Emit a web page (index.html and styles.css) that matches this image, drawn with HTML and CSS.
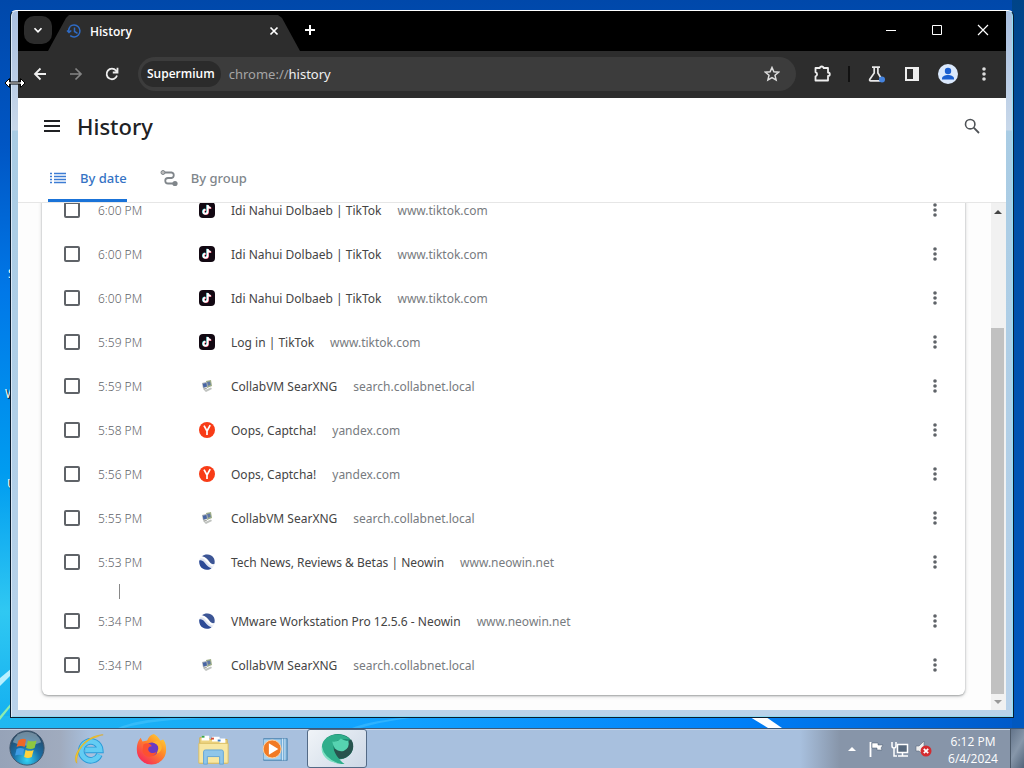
FILE: index.html
```html
<!DOCTYPE html>
<html lang="en">
<head>
    <meta charset="utf-8">
    <title>History</title>
    <link rel="stylesheet" href="styles.css">
</head>

<body>
    <!-- shared icons -->
    <svg class="sprite" aria-hidden="true">
        <symbol id="dots" viewBox="0 0 16 16">
            <circle cx="8" cy="3" r="1.8"/><circle cx="8" cy="8" r="1.8"/><circle cx="8" cy="13" r="1.8"/>
        </symbol>
        <symbol id="tiktok" viewBox="0 0 16 16">
            <rect width="16" height="16" rx="4" fill="#120812"/>
            <path d="M8.600 3v6.700a2.100 2.100 0 1 1-2.100-2.100M8.600 3.200c.3 1.700 1.400 2.600 3.200 2.700" transform="translate(-.5 -.3)" fill="none" stroke="#39d5d8" stroke-width="1.600"/>
            <path d="M8.600 3v6.700a2.100 2.100 0 1 1-2.100-2.100M8.600 3.200c.3 1.700 1.400 2.600 3.200 2.700" transform="translate(.6 .4)" fill="none" stroke="#ee3a5c" stroke-width="1.600"/>
            <path d="M8.600 3v6.700a2.100 2.100 0 1 1-2.100-2.100M8.600 3.200c.3 1.700 1.400 2.600 3.200 2.700" fill="none" stroke="#fff" stroke-width="1.900"/>
        </symbol>
        <symbol id="collabvm" viewBox="0 0 16 16">
            <path d="M7 3l5-1 1 6-5 2z" fill="#9fae86"/>
            <path d="M8 4l3-.6.700 3.600-3 .8z" fill="#5f77a4"/>
            <path d="M3 5l5-1.200 1 5-5 1.500z" fill="#a9afb5"/>
            <path d="M3.800 5.800l3.500-.8.700 3.400-3.500 1z" fill="#4664a4"/>
            <path d="M5 12.500l7-3 1 1.500-6 3z" fill="#c0c3c0"/>
            <path d="M4 10.500l3.500-.8.500 1-3 1.300z" fill="#a5a8a2"/>
        </symbol>
        <symbol id="yandex" viewBox="0 0 16 16">
            <circle cx="8" cy="8" r="8" fill="#f83c17"/>
            <path d="M5 3.600l3 5.400v4M11.200 3.200L8 9" fill="none" stroke="#fff" stroke-width="1.700"/>
        </symbol>
        <symbol id="neowin" viewBox="0 0 16 16">
            <circle cx="8" cy="8" r="7.800" fill="#dfe5f1"/>
            <path d="M3 2.200C7-.8 13 .5 15 4.500c.8 2 .8 4 .3 5.500-2 .3-3.500-.5-5-2.500C8 4.500 6 3 3 2.200z" fill="#3c5595"/>
            <path d="M.3 6.500C2.500 6 4 6.800 6 9.300c2 2.600 4 4.500 6.500 5C9 17 3.500 16 1.200 12 .2 10 0 8 .3 6.500z" fill="#2c4a96"/>
            <path d="M1 3.500C5 3 6.500 5 9 8s4 4 5.500 3.500" fill="none" stroke="#fff" stroke-width="1.800"/>
        </symbol>
    </svg>

    <main class="desktop">
        <svg class="wallpaper" viewBox="0 0 1024 728" preserveAspectRatio="none" aria-hidden="true">
            <path d="M0 678L12 668V674L0 686z" fill="#b8f0ff"/>
            <path d="M0 716L12 702V705L0 720z" fill="#8cecb0"/>
            <path d="M118 728Q135 720 170 718H210Q150 720 124 728z" fill="#5cccff" opacity=".4"/>
            <path d="M352 728Q366 722 400 718H410Q380 722 360 728z" fill="#4bc4ff" opacity=".5"/>
            <path d="M750 717H766L782 728H768z" fill="#fff"/>
        </svg>
        <span class="shortcut shortcut-1">S</span>
        <span class="shortcut shortcut-2">W</span>
        <span class="shortcut shortcut-3">U</span>

        <section class="window">
            <header class="titlebar">
                <button class="tab-search" aria-label="Search tabs">
                    <svg viewBox="0 0 16 16"><path d="M4 6l4 4 4-4" fill="none" stroke="#fff" stroke-width="2"/></svg>
                </button>
                <div class="browser-tab">
                    <svg class="tab-icon" viewBox="0 0 16 16"><path d="M4 3.500A6 6 0 1 1 4.200 12.700M2.800 9A6 6 0 0 1 4 3.800M8.500 4.500v4l3 1.800M1 7.500l2 2 2.300-2" fill="none" stroke="#2f6bc4" stroke-width="1.500"/></svg>
                    <span class="tab-title">History</span>
                    <button class="icon-button tab-close" aria-label="Close tab">
                        <svg viewBox="0 0 16 16"><path d="M4.500 4.500l7 7m0-7l-7 7" stroke="#fff" stroke-width="1.700"/></svg>
                    </button>
                </div>
                <button class="icon-button new-tab" aria-label="New tab">
                    <svg viewBox="0 0 16 16"><path d="M8 3v10M3 8h10" stroke="#fff" stroke-width="2"/></svg>
                </button>
                <div class="window-buttons">
                    <button class="icon-button" aria-label="Minimize"><svg viewBox="0 0 16 16"><path d="M3 8.500h10" stroke="#fff"/></svg></button>
                    <button class="icon-button" aria-label="Maximize"><svg viewBox="0 0 16 16"><path d="M3.500 3.500h9v9h-9z" fill="none" stroke="#fff"/></svg></button>
                    <button class="icon-button" aria-label="Close"><svg viewBox="0 0 16 16"><path d="M3 3l10 10M13 3L3 13" stroke="#fff" stroke-width="1.200"/></svg></button>
                </div>
            </header>

            <nav class="toolbar">
                <button class="icon-button" aria-label="Back"><svg viewBox="0 0 16 16"><path d="M14 8H3m5.500-5.500L3 8l5.500 5.500" fill="none" stroke="#eee" stroke-width="1.800"/></svg></button>
                <button class="icon-button" aria-label="Forward"><svg viewBox="0 0 16 16"><path d="M2 8h11M7.500 2.500L13 8l-5.500 5.500" fill="none" stroke="#858585" stroke-width="1.700"/></svg></button>
                <button class="icon-button" aria-label="Reload"><svg viewBox="0 0 16 16"><path d="M13 9.500a5.300 5.300 0 1 1-1-5l1 1.500M13.500 1.800v4.700H8.800" fill="none" stroke="#eee" stroke-width="1.800"/></svg></button>
                <form class="omnibox">
                    <button type="button" class="site-chip">Supermium</button>
                    <a class="address" href="chrome://history">chrome://<b>history</b></a>
                    <button type="button" class="icon-button" aria-label="Bookmark this tab"><svg viewBox="0 0 16 16"><path d="M8 1.500l1.900 4.300 4.700.4-3.600 3.100 1.100 4.600L8 11.500l-4.100 2.400L5 9.300 1.400 6.200l4.700-.4z" fill="none" stroke="#ddd" stroke-width="1.500"/></svg></button>
                </form>
                <button class="icon-button" aria-label="Extensions"><svg class="wide" viewBox="0 0 18 18"><path d="M2.500 3h4.300q0-1.500 1.900-1.500T10.600 3H15v4.500q1.800 0 1.800 1.700T15 11v4.500H2.500V11.300q1.600-.2 1.600-2t-1.600-2z" fill="none" stroke="#eee" stroke-width="1.800" stroke-linejoin="round"/></svg></button>
                <span class="divider"></span>
                <button class="icon-button" aria-label="Experiments"><svg class="wide" viewBox="0 0 18 18"><path d="M5 2.200h8M7.200 2.500V8l-4.500 6.500q-.4 1.300 1 1.400H14q1.500-.2.900-1.400L10.900 8V2.500" fill="none" stroke="#e8e8e8" stroke-width="1.700"/><circle cx="15" cy="14.500" r="3" fill="#4584df"/></svg></button>
                <button class="icon-button" aria-label="Side panel"><svg viewBox="0 0 16 16"><path d="M1 1h14v14H1zM3 3v10h6V3z" fill="#eee" fill-rule="evenodd"/></svg></button>
                <button class="icon-button" aria-label="Profile"><svg class="avatar" viewBox="0 0 20 20"><circle cx="10" cy="10" r="10" fill="#dbe9fd"/><circle cx="10" cy="7" r="3.200" fill="#1a5fd0"/><path d="M4 15.500v-1c0-2.200 3-3.500 6-3.500s6 1.300 6 3.500v1z" fill="#1a5fd0"/></svg></button>
                <button class="icon-button" aria-label="Menu"><svg viewBox="0 0 16 16" fill="#ddd"><use href="#dots"/></svg></button>
            </nav>

            <div class="page">
                <header class="page-header">
                    <button class="icon-button" aria-label="Main menu"><svg viewBox="0 0 16 16"><path d="M0 3h16M0 8h16M0 13h16" stroke="#202124" stroke-width="2"/></svg></button>
                    <h1>History</h1>
                    <button class="icon-button search" aria-label="Search history"><svg viewBox="0 0 16 16"><circle cx="6.200" cy="6.200" r="4.700" fill="none" stroke="#4f5357" stroke-width="1.600"/><path d="M9.700 9.700l5.300 5.300" stroke="#4f5357" stroke-width="1.800"/></svg></button>
                </header>

                <div class="view-tabs" role="tablist">
                    <button class="view-tab active" role="tab" aria-selected="true">
                        <svg viewBox="0 0 20 20"><path d="M2 5.500h2m2 0h12M2 8.500h2m2 0h12M2 11.500h2m2 0h12M2 14.500h2m2 0h12" stroke="#3c7cd4" stroke-width="1.400"/></svg>
                        By date
                    </button>
                    <button class="view-tab" role="tab" aria-selected="false">
                        <svg viewBox="0 0 20 20"><path d="M5 4.500h7.500a2.800 2.800 0 0 1 0 5.500H9a2.700 2.700 0 0 0 0 5.500h6" fill="none" stroke="#80868b" stroke-width="1.800"/><circle cx="4" cy="4.500" r="2" fill="#bbb" stroke="#80868b"/><circle cx="16" cy="15.500" r="2.600" fill="#80868b"/></svg>
                        By group
                    </button>
                </div>

                <div class="scroll-area">
                    <div class="history">
                        <ul class="card">
                            <li class="row"><input type="checkbox" id="e1"><time>6:00 PM</time><svg class="favicon"><use href="#tiktok"/></svg><label for="e1">Idi Nahui Dolbaeb | TikTok</label><span class="domain">www.tiktok.com</span><button class="icon-button more" aria-label="Actions"><svg><use href="#dots"/></svg></button></li>
                            <li class="row"><input type="checkbox" id="e2"><time>6:00 PM</time><svg class="favicon"><use href="#tiktok"/></svg><label for="e2">Idi Nahui Dolbaeb | TikTok</label><span class="domain">www.tiktok.com</span><button class="icon-button more" aria-label="Actions"><svg><use href="#dots"/></svg></button></li>
                            <li class="row"><input type="checkbox" id="e3"><time>6:00 PM</time><svg class="favicon"><use href="#tiktok"/></svg><label for="e3">Idi Nahui Dolbaeb | TikTok</label><span class="domain">www.tiktok.com</span><button class="icon-button more" aria-label="Actions"><svg><use href="#dots"/></svg></button></li>
                            <li class="row"><input type="checkbox" id="e4"><time>5:59 PM</time><svg class="favicon"><use href="#tiktok"/></svg><label for="e4">Log in | TikTok</label><span class="domain">www.tiktok.com</span><button class="icon-button more" aria-label="Actions"><svg><use href="#dots"/></svg></button></li>
                            <li class="row"><input type="checkbox" id="e5"><time>5:59 PM</time><svg class="favicon"><use href="#collabvm"/></svg><label for="e5">CollabVM SearXNG</label><span class="domain">search.collabnet.local</span><button class="icon-button more" aria-label="Actions"><svg><use href="#dots"/></svg></button></li>
                            <li class="row"><input type="checkbox" id="e6"><time>5:58 PM</time><svg class="favicon"><use href="#yandex"/></svg><label for="e6">Oops, Captcha!</label><span class="domain">yandex.com</span><button class="icon-button more" aria-label="Actions"><svg><use href="#dots"/></svg></button></li>
                            <li class="row"><input type="checkbox" id="e7"><time>5:56 PM</time><svg class="favicon"><use href="#yandex"/></svg><label for="e7">Oops, Captcha!</label><span class="domain">yandex.com</span><button class="icon-button more" aria-label="Actions"><svg><use href="#dots"/></svg></button></li>
                            <li class="row"><input type="checkbox" id="e8"><time>5:55 PM</time><svg class="favicon"><use href="#collabvm"/></svg><label for="e8">CollabVM SearXNG</label><span class="domain">search.collabnet.local</span><button class="icon-button more" aria-label="Actions"><svg><use href="#dots"/></svg></button></li>
                            <li class="row"><input type="checkbox" id="e9"><time>5:53 PM</time><svg class="favicon"><use href="#neowin"/></svg><label for="e9">Tech News, Reviews &amp; Betas | Neowin</label><span class="domain">www.neowin.net</span><button class="icon-button more" aria-label="Actions"><svg><use href="#dots"/></svg></button></li>
                            <li class="time-gap"></li>
                            <li class="row"><input type="checkbox" id="e10"><time>5:34 PM</time><svg class="favicon"><use href="#neowin"/></svg><label for="e10">VMware Workstation Pro 12.5.6 - Neowin</label><span class="domain">www.neowin.net</span><button class="icon-button more" aria-label="Actions"><svg><use href="#dots"/></svg></button></li>
                            <li class="row"><input type="checkbox" id="e11"><time>5:34 PM</time><svg class="favicon"><use href="#collabvm"/></svg><label for="e11">CollabVM SearXNG</label><span class="domain">search.collabnet.local</span><button class="icon-button more" aria-label="Actions"><svg><use href="#dots"/></svg></button></li>
                        </ul>
                    </div>
                    <div class="scrollbar">
                        <svg viewBox="0 0 14 16"><path d="M3 11h8L7 7z" fill="#444"/></svg>
                        <div class="track"><div class="thumb"></div></div>
                        <svg viewBox="0 0 14 16"><path d="M3 6h8l-4 4z" fill="#999"/></svg>
                    </div>
                </div>
            </div>
        </section>

        <svg class="cursor" viewBox="0 0 22 12" aria-hidden="true"><path d="M1 6l4.500-4.500V5h11V1.500L21 6l-4.500 4.500V7h-11v3.500z" fill="#fff" stroke="#000"/></svg>
    </main>

    <footer class="taskbar">
        <button class="start" aria-label="Start">
            <svg viewBox="0 0 40 40">
                <defs>
                    <radialGradient id="orb" cx=".5" cy=".85" r=".8"><stop offset="0" stop-color="#35d4f5"/><stop offset=".5" stop-color="#1a6ea6"/><stop offset="1" stop-color="#264560"/></radialGradient>
                </defs>
                <circle cx="20" cy="20" r="18" fill="url(#orb)" stroke="#3c5268"/>
                <path d="M5 14Q9 3 20 3t15 11q-15 7-30 0z" fill="#c7dbe5" opacity=".45"/>
                <path d="M11 12q4-3 8-1l-1.500 8q-4-2-8.500 0z" fill="#ee6828"/>
                <path d="M21 12q4 2 9 0l-2 8q-4 2-9 0z" fill="#8fc740"/>
                <path d="M9 21q4-2 8 0l-1.500 7q-4-2-8 0z" fill="#3f9ce5"/>
                <path d="M18.500 22q4 2 8.500 0l-2 7.500q-4 2-8 0z" fill="#ffd33c"/>
            </svg>
        </button>
        <button class="task" aria-label="Internet Explorer">
            <svg viewBox="0 0 36 36">
                <path d="M29 24a10 10 0 1 1 .8-5H14" fill="none" stroke="#2a9ad8" stroke-width="7"/>
                <path d="M29 24a10 10 0 1 1 .8-5H14" fill="none" stroke="#63ccf3" stroke-width="5"/>
                <path d="M5 33C-1 26 13 3 33 3c-2 0-4 1-6 2C13 8 4 21 5 33z" fill="#f6ce2a" stroke="#e0a920" stroke-width=".6"/>
            </svg>
        </button>
        <button class="task" aria-label="Firefox">
            <svg viewBox="0 0 36 36">
                <defs><linearGradient id="fox" x1="1" y1="0" x2=".2" y2="1"><stop offset="0" stop-color="#ffe43a"/><stop offset=".45" stop-color="#ff8a28"/><stop offset="1" stop-color="#f6235d"/></linearGradient></defs>
                <path d="M21 2c5 3 6 6 7 7l3-1c3 4 3 8 3 11a15 15 0 0 1-31 0c0-6 1-9 4-13l2 4 5-1c1-3 3-6 7-7z" fill="url(#fox)"/>
                <circle cx="19" cy="18" r="7" fill="#6b3bc2"/>
                <path d="M10 13c4-2 7-1 9 2-3 0-4 1-4 4 2 4 6 4 9 2-2 7-13 7-15-1z" fill="#fc5130"/>
                <path d="M20 11c4 1 6 3 6 6l-2 6c6-2 8-9 1-14z" fill="#ffb42f"/>
            </svg>
        </button>
        <button class="task" aria-label="Windows Explorer">
            <svg viewBox="0 0 36 36">
                <path d="M4 6h9l2 2h18v25H4z" fill="#eed582" stroke="#cfae52"/>
                <path d="M6 4h8v5H6zM17 5h8v5h-8zM25 7h6v5h-6z" fill="#fff"/>
                <path d="M6 4h3v2H6z" fill="#37a648"/><path d="M16 6h3v2h-3z" fill="#d84930"/><path d="M23 8h3v2h-3z" fill="#3b7ec9"/>
                <path d="M3 12h31v21H3z" fill="#f8e7a2" stroke="#dabd63"/>
                <path d="M8 34V21q0-2 2-2h17q2 0 2 2v13h-4v-8H12v8z" fill="#8fc6ea" stroke="#64a5d6"/>
            </svg>
        </button>
        <button class="task" aria-label="Windows Media Player">
            <svg viewBox="0 0 36 36">
                <path d="M6 7h25v23H6z" fill="#78afd8" stroke="#5589b4"/><path d="M26 7v23M28.500 7v23" stroke="#d4e9f8"/>
                <path d="M6 8h18v21H6z" fill="#a9d2ef"/>
                <circle cx="15" cy="18" r="9.500" fill="#f17a24" stroke="#ffd1a0"/>
                <path d="M11.500 12l10 6-10 6z" fill="#fff"/>
            </svg>
        </button>
        <button class="task running" aria-label="Supermium">
            <svg viewBox="0 0 36 36">
                <ellipse cx="19" cy="15.500" rx="16" ry="13.500" fill="#178069"/>
                <path d="M12 20L33 8c5 8 1 17-8 20-6 1-11-2-13-8z" fill="#28534e"/>
                <path d="M2 16C2 3 22-2 32 8q-15-2-18 6c0 8 6 15 12 20C12 34 2 26 2 16z" fill="#2fae8b"/>
                <path d="M13 10q6 1 9-3 4 3 8 2 2 8-5 11-10 2-12-10z" fill="#56d3b0"/>
                <path d="M2 15q2 12 17 18C8 32 0 24 2 15z" fill="#7ee0c3"/>
            </svg>
        </button>
        <div class="tray">
            <button class="tray-icon" aria-label="Show hidden icons"><svg viewBox="0 0 20 20"><path d="M6 12h8l-4-4z" fill="#fff"/></svg></button>
            <button class="tray-icon" aria-label="Action Center"><svg viewBox="0 0 20 20"><path d="M4.500 3v15" stroke="#fff" stroke-width="1.800"/><path d="M6 4h6v2h5l-2 3 1 2h-5V9H6z" fill="#fff" stroke="#47566a" stroke-width=".5"/></svg></button>
            <button class="tray-icon" aria-label="Network"><svg viewBox="0 0 20 20"><path d="M7.500 5.500h10v8h-10zM12.500 14v3M8 17h10" fill="#58697d" stroke="#fff" stroke-width="1.500"/><path d="M2 3v4q0 2 2 2t2-2V3M4 9v8h3" fill="none" stroke="#fff" stroke-width="1.500"/></svg></button>
            <button class="tray-icon" aria-label="Volume muted"><svg viewBox="0 0 20 20"><path d="M2 7h3l5-5v15l-5-5H2z" fill="#eee" stroke="#5e6d80" stroke-width=".6"/><circle cx="12" cy="12" r="5.500" fill="#d42b2f"/><path d="M9.800 9.800l4.400 4.400m0-4.400l-4.400 4.400" stroke="#fff" stroke-width="1.700"/></svg></button>
        </div>
        <time class="clock">6:12 PM<br>6/4/2024</time>
        <button class="show-desktop" aria-label="Show desktop"></button>
    </footer>
</body>
</html>
```
FILE: styles.css
```css
* {
    box-sizing: border-box;
}

body {
    margin: 0;
    height: 100vh;
    display: flex;
    flex-direction: column;
    overflow: hidden;
    font-family: "Noto Sans", "Open Sans", sans-serif;
    font-size: 12px;
}

button {
    margin: 0;
    padding: 0;
    border: none;
    background: none;
    font: inherit;
    color: inherit;
}

.sprite {
    position: absolute;
    width: 0;
    height: 0;
}

/* desktop */
.desktop {
    position: relative;
    flex: 1;
    min-height: 0;
    display: flex;
    padding: 10px;
    background:
        linear-gradient(#004488, #0050a8 30%, #0058c0) right / 12px 100% no-repeat,
        linear-gradient(to right, #20b8f0, #10a0ff 40%, #0080f8 72%, #0058c8) bottom / 100% 12px no-repeat,
        linear-gradient(#0048aa, #0056c4 20%, #0078e8 40%, #009cf0 65%, #30c8f2 84%, #12aef0);
}

.wallpaper {
    position: absolute;
    left: 0;
    top: 0;
    width: 100%;
    height: 100%;
}

.shortcut {
    position: absolute;
    left: 5px;
    color: #fff;
    text-shadow: 1px 1px 1px #000;
}

.shortcut-1 {
    top: 265px;
    left: 8px;
}

.shortcut-2 {
    top: 385px;
}

.shortcut-3 {
    top: 475px;
    left: 7px;
}

.cursor {
    position: absolute;
    left: 4px;
    top: 77px;
    width: 22px;
    height: 12px;
}

/* window frame */
.window {
    position: relative;
    flex: 1;
    min-width: 0;
    display: flex;
    flex-direction: column;
    padding: 0 7px 7px;
    border: 1px solid #0b1d30;
    border-top-color: #fff;
    border-radius: 6px 6px 0 0;
    background: linear-gradient(#a9bfdf, #c8d8ea 119px, #a9cce4 120px, #b9d2ea);
    box-shadow: inset 1px 0 #dceaf8, inset -1px 0 #8ce0f8, inset 0 -1px #8cd8f0;
}

.icon-button {
    display: flex;
    align-items: center;
    justify-content: center;
    flex: none;
    width: 36px;
    height: 36px;
}

.icon-button svg {
    width: 16px;
    height: 16px;
}

.icon-button .wide {
    width: 18px;
    height: 18px;
}

.icon-button .avatar {
    width: 20px;
    height: 20px;
}

/* title bar */
.titlebar {
    display: flex;
    align-items: center;
    height: 40px;
    padding: 0 0 2px 6px;
    background: #000;
}

.tab-search {
    display: flex;
    align-items: center;
    justify-content: center;
    width: 28px;
    height: 28px;
    border-radius: 10px;
    background: #2c2c2c;
}

.tab-search svg {
    width: 14px;
    height: 14px;
}

.browser-tab {
    display: flex;
    align-items: center;
    align-self: flex-end;
    width: 252px;
    height: 36px;
    margin: 0 0 -2px -4px;
    padding: 0 18px 4px;
    background: #2d2d2d;
    clip-path: polygon(0 100%, 18px 3px, 21px 0, 230px 0, 234px 3px, 100% 100%);
    color: #fff;
    font-weight: 600;
}

.tab-icon {
    width: 16px;
    height: 16px;
    margin-right: 8px;
}

.tab-title {
    flex: 1;
    font-family: "Open Sans", sans-serif;
}

.tab-close {
    width: 16px;
}

.new-tab {
    width: 20px;
}

.window-buttons {
    display: flex;
    margin-left: auto;
}

.window-buttons .icon-button {
    width: 46px;
}

/* toolbar */
.toolbar {
    display: flex;
    align-items: center;
    height: 47px;
    padding: 0 4px 2px;
    background: #2d2d2d;
}

.omnibox {
    flex: 1;
    display: flex;
    align-items: center;
    height: 34px;
    margin: 0 8px;
    padding: 0 6px 0 3px;
    border-radius: 17px;
    background: #3c3c3c;
}

.site-chip {
    height: 26px;
    padding: 0 6px;
    border-radius: 13px;
    background: #2b2b2b;
    color: #fff;
    font-family: "Open Sans", sans-serif;
    font-weight: 600;
}

.address {
    flex: 1;
    margin-left: 8px;
    color: #a5a5a5;
    font-size: 13px;
    text-decoration: none;
}

.address b {
    color: #f0f0f0;
    font-weight: 400;
}

.divider {
    width: 2px;
    height: 16px;
    margin: 0 8px;
    background: #111;
}

/* history page */
.page {
    flex: 1;
    min-height: 0;
    display: flex;
    flex-direction: column;
    background: #fff;
}

.page-header {
    display: flex;
    align-items: center;
    height: 56px;
    padding: 0 16px;
}

.page-header h1 {
    flex: 1;
    margin: 0 0 0 7px;
    color: #202124;
    font-size: 22px;
    font-weight: 500;
}

.view-tabs {
    display: flex;
    gap: 32px;
    height: 49px;
    padding-left: 30px;
    border-bottom: 1px solid #e6e6e6;
}

.view-tab {
    display: flex;
    align-items: center;
    gap: 12px;
    border-top: 3px solid transparent;
    border-bottom: 3px solid transparent;
    color: #80868b;
    font-size: 13px;
    font-weight: 500;
}

.view-tab svg {
    width: 20px;
    height: 20px;
}

.view-tab.active {
    border-bottom-color: #1a73d8;
    color: #3573c4;
}

.scroll-area {
    flex: 1;
    min-height: 0;
    display: flex;
    overflow: hidden;
}

/* list is scrolled to its end */
.history {
    flex: 1;
    display: flex;
    flex-direction: column;
    justify-content: flex-end;
    padding: 0 26px 15px 24px;
    background: #fdfdfd;
}

.card {
    margin: 0;
    padding: 0 0 8px;
    list-style: none;
    border-radius: 6px;
    background: #fff;
    box-shadow: 0 1px 2px rgba(60, 64, 67, 0.4), 0 1px 4px rgba(60, 64, 67, 0.2);
}

.row {
    display: flex;
    align-items: center;
    height: 44px;
    padding: 0 12px 0 22px;
    color: #444;
}

.row input {
    appearance: none;
    width: 16px;
    height: 16px;
    margin: 0 18px 0 0;
    border: 2px solid #5f6368;
    border-radius: 2px;
}

.row time {
    width: 101px;
    color: #5f6368;
    font-weight: 300;
}

.favicon {
    width: 16px;
    height: 16px;
    margin-right: 16px;
}

.domain {
    margin-left: 16px;
    color: #777b80;
}

.more {
    margin-left: auto;
    fill: #5f6368;
}

.time-gap {
    height: 15px;
    margin-left: 77px;
    border-left: 1px solid #888;
}

.scrollbar {
    display: flex;
    flex-direction: column;
    width: 15px;
    background: #f1f1f1;
}

.scrollbar svg {
    width: 14px;
    height: 16px;
}

.track {
    flex: 1;
    display: flex;
    align-items: flex-end;
}

.thumb {
    width: 13px;
    height: 77%;
    background: #c1c1c1;
}

/* taskbar */
.taskbar {
    display: flex;
    height: 40px;
    border-top: 1px solid #3c5878;
    background: linear-gradient(to right, #96a3b8, #a0abbe 60px, #a8c0de 90px, #a8c0de 800px, #8795a9 840px, #8795a9);
    box-shadow: inset 0 1px #c9d5e6;
}

.start {
    width: 54px;
    height: 39px;
    margin-right: 5px;
}

.start svg {
    width: 38px;
    height: 38px;
}

.task {
    display: flex;
    align-items: center;
    justify-content: center;
    width: 60px;
    height: 39px;
    margin-right: 2px;
}

.task svg {
    width: 34px;
    height: 34px;
}

.running {
    border: 1px solid #536a86;
    border-radius: 3px;
    background: linear-gradient(135deg, #f0f4f8, #cdd8e6);
}

.tray {
    display: flex;
    align-items: center;
    gap: 4px;
    margin-left: auto;
}

.tray-icon {
    width: 20px;
    height: 20px;
}

.tray-icon svg {
    display: block;
    width: 20px;
    height: 20px;
}

.clock {
    width: 76px;
    padding: 4px 0 0 2px;
    color: #fff;
    font-family: "Open Sans", sans-serif;
    line-height: 17px;
    text-align: center;
}

.show-desktop {
    width: 14px;
    border-left: 1px solid #4a5868;
    background: linear-gradient(120deg, #63748a, #8797aa, #52647a);
}
```
